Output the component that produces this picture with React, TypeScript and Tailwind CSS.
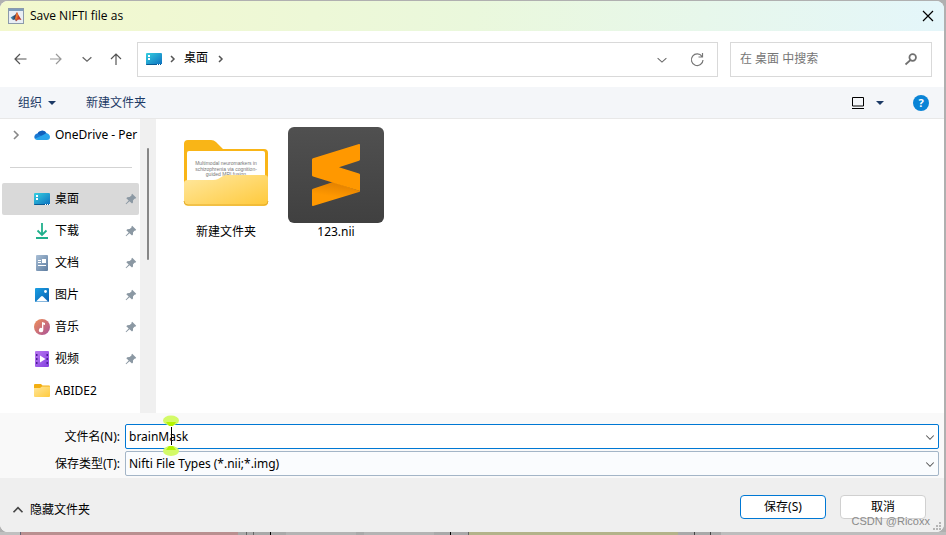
import type { ReactNode } from "react";

const places = [
  { name: "桌面", icon: <DesktopIcon />, pinned: true, active: true },
  { name: "下载", icon: <DownloadIcon />, pinned: true },
  { name: "文档", icon: <DocumentIcon />, pinned: true },
  { name: "图片", icon: <PictureIcon />, pinned: true },
  { name: "音乐", icon: <MusicIcon />, pinned: true },
  { name: "视频", icon: <VideoIcon />, pinned: true },
  { name: "ABIDE2", icon: <SmallFolderIcon />, pinned: false },
];

function Stroke({ d, className = "size-4 text-[#666]", width = 1.2 }: { d: string; className?: string; width?: number }) {
  return (
    <svg viewBox="0 0 16 16" className={`shrink-0 ${className}`} fill="none" stroke="currentColor" strokeWidth={width}>
      <path d={d} />
    </svg>
  );
}

function MatlabIcon() {
  return (
    <svg viewBox="0 0 16 16" className="size-4 shrink-0">
      <defs>
        <linearGradient id="matlab" x1="0" x2="1">
          <stop offset="0" stopColor="#4aa3c9" />
          <stop offset=".4" stopColor="#313f63" />
          <stop offset=".6" stopColor="#d9482b" />
          <stop offset="1" stopColor="#a22b20" />
        </linearGradient>
      </defs>
      <rect x=".5" y=".5" width="15" height="15" fill="#e9eef4" stroke="#8c9aab" />
      <rect x="1" y="1" width="14" height="2" fill="#7f9dbd" />
      <path d="M2.500 9.500l2.500-1.500 2-1 2-3 1.500 3 3 5-2-.6-1.500.4-2 1.700-1-2-2 .5z" fill="url(#matlab)" />
      <path d="M9 4l1 3.500-2 5-1-1.500 1-4z" fill="#e9762c" />
    </svg>
  );
}

function DesktopIcon() {
  return (
    <svg viewBox="0 0 16 16" className="size-4 shrink-0">
      <defs>
        <linearGradient id="desk" x1="0" y1="0" x2="1" y2="1">
          <stop offset="0" stopColor="#35cfe0" />
          <stop offset="1" stopColor="#0d6fc0" />
        </linearGradient>
      </defs>
      <rect y="2" width="16" height="12" rx="1" fill="url(#desk)" />
      <path d="M2 4h2v2H2zM2 7h2v2H2z" fill="#fff" />
      <path d="M0 13h16a1 1 0 0 1-1 1H1a1 1 0 0 1-1-1z" fill="#075a94" />
      <path d="M11 13.500h1M13 13.500h1M15 13.500h1" stroke="#fff" />
    </svg>
  );
}

function DownloadIcon() {
  return (
    <svg viewBox="0 0 16 16" className="size-4 shrink-0" fill="none" stroke="#20b08c" strokeWidth="1.8">
      <path d="M8 0v12M3.500 7.500L8 12l4.500-4.500M2 15h12" />
    </svg>
  );
}

function DocumentIcon() {
  return (
    <svg viewBox="0 0 16 16" className="size-4 shrink-0">
      <defs>
        <linearGradient id="doc" x1="0" y1="0" x2="1" y2="1">
          <stop offset="0" stopColor="#a9bfd6" />
          <stop offset="1" stopColor="#5d7c9f" />
        </linearGradient>
      </defs>
      <rect x="2" y="0" width="12" height="16" rx="1" fill="url(#doc)" />
      <path d="M4 5.500h3M4 7.500h3M4 10.500h8" stroke="#fff" />
      <path d="M8 4h4v4H8z" fill="#fff" />
    </svg>
  );
}

function PictureIcon() {
  return (
    <svg viewBox="0 0 16 16" className="size-4 shrink-0">
      <defs>
        <linearGradient id="pic" x1="0" y1="0" x2="1" y2="1">
          <stop offset="0" stopColor="#1aa0e4" />
          <stop offset="1" stopColor="#0a5fb0" />
        </linearGradient>
      </defs>
      <rect x="1" y="1" width="14" height="14" rx="1" fill="url(#pic)" />
      <path d="M2 14.500l5-5q1-1 2 0l5 5z" fill="#fff" />
      <circle cx="11.500" cy="4.500" r="1.400" fill="#fff" />
    </svg>
  );
}

function MusicIcon() {
  return (
    <svg viewBox="0 0 16 16" className="size-4 shrink-0">
      <defs>
        <linearGradient id="music" x1="0" y1="0" x2="1" y2="1">
          <stop offset="0" stopColor="#f09056" />
          <stop offset="1" stopColor="#a9529a" />
        </linearGradient>
      </defs>
      <circle cx="8" cy="8" r="8" fill="url(#music)" />
      <path d="M8 3l3 1v2L9.300 5.500V11a2.200 2.200 0 1 1-1.300-2z" fill="#fff" />
    </svg>
  );
}

function VideoIcon() {
  return (
    <svg viewBox="0 0 16 16" className="size-4 shrink-0">
      <defs>
        <linearGradient id="video" x1="0" y1="0" x2="1" y2="1">
          <stop offset="0" stopColor="#b978f0" />
          <stop offset="1" stopColor="#8441e0" />
        </linearGradient>
      </defs>
      <rect x="1" width="14" height="16" rx="1" fill="url(#video)" />
      <path d="M2 3h1.500v2H2zM2 7h1.500v2H2zM2 11h1.500v2H2zM12.500 3H14v2h-1.500zM12.500 7H14v2h-1.500zM12.500 11H14v2h-1.500z" fill="#4c1d95" />
      <path d="M6 4.500l5.500 3.500L6 11.500z" fill="#fff" />
    </svg>
  );
}

function SmallFolderIcon() {
  return (
    <svg viewBox="0 0 16 16" className="size-4 shrink-0">
      <defs>
        <linearGradient id="sfold" x1="0" y1="0" x2="1" y2="1">
          <stop offset="0" stopColor="#ffe69a" />
          <stop offset="1" stopColor="#ffca3e" />
        </linearGradient>
      </defs>
      <path d="M0 2A1 1 0 0 1 1 1h6l1.500 1.500H15a1 1 0 0 1 1 1V12H0z" fill="#f3ae10" />
      <path d="M0 5h6L8 3.500h8V13a1 1 0 0 1-1 1H1a1 1 0 0 1-1-1z" fill="url(#sfold)" />
    </svg>
  );
}

function CloudIcon() {
  return (
    <svg viewBox="0 0 16 16" className="size-4 shrink-0">
      <path d="M3 8a5.200 5.200 0 0 1 9.800-1.500L9 10z" fill="#0f5fbd" />
      <path d="M3.500 6.500A3.500 3.500 0 0 0 1 12l8-2z" fill="#1a78d2" />
      <path d="M12 6.300a3.600 3.600 0 0 1 4 3.400A3.300 3.300 0 0 1 12.800 13H3.500A3.500 3.500 0 0 1 .8 11.800L9 8z" fill="#28a4ec" />
    </svg>
  );
}

function PinIcon() {
  return (
    <svg viewBox="0 0 12 12" className="size-3 shrink-0" fill="#8b98a3">
      <path d="M7.200.8L11.200 4.800 10.200 5.800 9.400 5.700 8 7.500 8 9.600 7 10.600 4.500 8.200 1.200 11.300.6 10.800 3.700 7.500 1.300 5.200 2.300 4.200 4.600 4.100 6.500 2.600 6.400 1.700z" />
    </svg>
  );
}

function FolderPreview() {
  return (
    <svg viewBox="0 0 86 68" className="mb-1 h-17 w-[86px]">
      <defs>
        <linearGradient id="front" x1="0" y1="0" x2="1" y2="1">
          <stop offset="0" stopColor="#ffe8a0" />
          <stop offset="1" stopColor="#ffc93a" />
        </linearGradient>
      </defs>
      <path d="M1 5q0-4 4-4h23q3 0 5 2l7 7h41q4 0 4 4v46H1z" fill="#f9b517" />
      <rect x="4" y="12" width="78" height="44" rx="2" fill="#fff" />
      <g fontFamily="Liberation Sans, sans-serif" fontSize="5" fill="#777" textAnchor="middle">
        <text x="43" y="26">Multimodal neuromarkers in</text>
        <text x="43" y="32">schizophrenia via cognition-</text>
        <text x="43" y="37">guided MRI fusion</text>
      </g>
      <path d="M1 44q0-3 4-3h25q3 0 5-1l5-3q2-1 4-1h37q4 0 4 3v24q0 4-4 4H5q-4 0-4-4z" fill="url(#front)" />
      <path d="M1 62q0 4 4 4h76q4 0 4-4" fill="none" stroke="#e5ad2c" />
    </svg>
  );
}

function SublimeIcon() {
  return (
    <svg viewBox="0 0 96 96" className="size-24">
      <defs>
        <linearGradient id="tile" x1="0" y1="0" x2="0" y2="1">
          <stop offset="0" stopColor="#505050" />
          <stop offset="1" stopColor="#404040" />
        </linearGradient>
        <linearGradient id="fold" x1=".3" y1="1" x2=".6" y2="0">
          <stop offset=".4" stopColor="#ff9800" />
          <stop offset="1" stopColor="#e07f00" />
        </linearGradient>
      </defs>
      <rect width="96" height="96" rx="6" fill="url(#tile)" />
      <path d="M24 63q0-1 1-1.300L45 55l27 9q0 .8-1 1.100L25 79q-1 .3-1-1z" fill="url(#fold)" />
      <path d="M24 32.500q0-1 1-1.300L71 17q1-.3 1 1v14.500q0 1-1 1.300L51 40.300l20 6.200q1 .3 1 1.300V64L25 49.500q-1-.3-1-1.300z" fill="#ff9800" />
    </svg>
  );
}

function FileItem({ name, children }: { name: string; children: ReactNode }) {
  return (
    <button className="flex w-[110px] flex-col items-center gap-px">
      <span className="flex h-24 items-center">{children}</span>
      <span className="leading-4">{name}</span>
    </button>
  );
}

function TitleBar() {
  return (
    <header className="flex h-[30px] shrink-0 items-center gap-1.5 bg-linear-to-r from-[#f3f8cd] via-[#eaf8dc] to-[#e4f6fa] px-2">
      <MatlabIcon />
      <h1 className="flex-1 font-['Open_Sans',sans-serif]">Save NIFTI file as</h1>
      <button aria-label="关闭">
        <Stroke d="M3 3l10 10M13 3L3 13" className="size-4 text-black" />
      </button>
    </header>
  );
}

function AddressBar() {
  return (
    <nav className="flex h-14 shrink-0 items-center px-3">
      <div className="flex w-[125px] items-center gap-4">
        <button aria-label="后退"><Stroke d="M14.500 8H3M8 3L3 8l5 5" className="size-4 text-[#555]" /></button>
        <button aria-label="前进" className="ml-1"><Stroke d="M2 8h11M8 3l5 5-5 5" className="size-4 text-[#999]" /></button>
        <button aria-label="最近"><Stroke d="M3 6l5 4.500L13 6" className="size-3.5 text-[#666]" width={1.5} /></button>
        <button aria-label="上移" className="-ml-0.5"><Stroke d="M8 14V3M3 8l5-5 5 5" className="size-4 text-[#555]" /></button>
      </div>
      <div className="flex h-[35px] flex-1 items-center border border-[#d9d9d9] px-2">
        <DesktopIcon />
        <Stroke d="M7 5l3 3-3 3" className="mx-0.5 size-4 text-[#555]" width={1.5} />
        <a href="#" className="mr-1 ml-0.5 pb-0.5">桌面</a>
        <Stroke d="M7 5l3 3-3 3" className="size-4 text-[#555]" width={1.5} />
        <span className="flex-1" />
        <button aria-label="历史" className="mr-5"><Stroke d="M3 7l5 4.500L13 7" className="size-3.5 text-[#666]" /></button>
        <button aria-label="刷新" className="mr-1"><Stroke d="M13 5.500A5.800 5.800 0 1 0 14 9M13.500 2v4h-4" className="size-4 text-[#777]" /></button>
      </div>
      <label className="ml-3 flex h-[35px] w-[202px] items-center border border-[#d9d9d9] px-2">
        <input aria-label="搜索" placeholder="在 桌面 中搜索" className="min-w-0 flex-1 pl-px outline-none placeholder:text-[#767676]" />
        <svg viewBox="0 0 16 16" className="mr-1 size-4" fill="none" stroke="#707070" strokeWidth="1.700">
          <circle cx="9.700" cy="6.500" r="3.300" />
          <path d="M7.500 9L2.500 13.500" />
        </svg>
      </label>
    </nav>
  );
}

function Toolbar() {
  return (
    <div className="flex h-8 shrink-0 items-center border-b border-[#e8e8e8] bg-[#f4f6f9] pr-[15px] pl-4 text-[#1c3a66]">
      <button className="ml-0.5 flex items-center gap-1.5">
        组织
        <svg viewBox="0 0 8 4" className="h-1 w-2"><path d="M0 0h8L4 4z" fill="currentColor" /></svg>
      </button>
      <button className="ml-[30px]">新建文件夹</button>
      <span className="flex-1" />
      <button aria-label="视图" className="flex items-center gap-3">
        <svg viewBox="0 0 12 12" className="size-3" fill="none" stroke="#000"><path d="M.5.500h11v8.500H.500zM0 11.500h12" /></svg>
        <svg viewBox="0 0 8 4" className="h-1 w-2"><path d="M0 0h8L4 4z" fill="currentColor" /></svg>
      </button>
      <button aria-label="帮助" className="ml-[29px] flex size-4 items-center justify-center rounded-full bg-[#0a84d6] text-[11px] font-bold text-white">?</button>
    </div>
  );
}

function Sidebar() {
  return (
    <aside className="flex w-39 shrink-0">
      <div className="min-w-0 flex-1">
        <a href="#" className="flex h-8 items-center gap-[5px] pl-2 whitespace-nowrap">
          <Stroke d="M6 4l4 4-4 4" className="mr-[5px] size-4 text-[#888]" width={1.6} />
          <CloudIcon />
          OneDrive - Per
        </a>
        <hr className="mt-4 mr-2 mb-[15px] ml-2.5 border-[#d3d3d3]" />
        <ul>
          {places.map((place) => (
            <li key={place.name}>
              <a
                href="#"
                className={`mr-px ml-0.5 flex h-8 items-center gap-[5px] rounded-xs pr-0.5 pl-8 ${place.active ? "bg-[#d9d9d9]" : ""}`}
              >
                {place.icon}
                <span className="flex-1">{place.name}</span>
                {place.pinned && <PinIcon />}
              </a>
            </li>
          ))}
        </ul>
      </div>
      <div className="flex w-4 justify-center bg-[#f0f0f0] pt-[29px]">
        <div className="h-28 w-0.5 rounded-full bg-[#868686]" />
      </div>
    </aside>
  );
}

function TextCursor() {
  return (
    <svg viewBox="0 0 16 42" className="absolute -top-[9px] left-[38px] h-[42px] w-4">
      <ellipse cx="8" cy="5.500" rx="8" ry="5" fill="#d3fa68" />
      <ellipse cx="8" cy="36" rx="8" ry="5" fill="#d3fa68" />
      <path d="M3 7h10l-3 4H6zM3 35h10l-3-4H6z" fill="#b4f500" />
      <path d="M8.500 12v18" stroke="#000" />
    </svg>
  );
}

function FileForm() {
  return (
    <div className="grid shrink-0 grid-cols-[120px_1fr] items-center gap-x-[5px] gap-y-0.5 bg-[#f9f9f9] pt-[11px] pr-[5px] pb-0.5">
      <label htmlFor="filename" className="text-right">文件名(N):</label>
      <div className="relative z-10 flex items-center">
        <input
          id="filename"
          defaultValue="brainMask"
          className="h-[25px] w-full rounded-xs border border-[#0078d4] bg-white px-[3px] outline-none"
        />
        <Stroke d="M3 6l5 5 5-5" className="pointer-events-none absolute right-[3px] size-3 text-[#555]" width={1.4} />
        <TextCursor />
      </div>
      <label htmlFor="filetype" className="text-right">保存类型(T):</label>
      <div className="relative flex items-center">
        <select
          id="filetype"
          className="h-[25px] w-full appearance-none rounded-xs border border-[#a3b5c7] bg-[#fafcfe] px-[3px] outline-none"
        >
          <option>Nifti File Types (*.nii;*.img)</option>
        </select>
        <Stroke d="M3 6l5 5 5-5" className="pointer-events-none absolute right-[3px] size-3 text-[#555]" width={1.4} />
      </div>
    </div>
  );
}

function Footer() {
  return (
    <footer className="relative flex h-[54px] shrink-0 items-center bg-[#efefef] pr-[18px] pl-3">
      <button className="mt-2.5 flex items-center gap-1.5">
        <Stroke d="M2 11l6-6 6 6" className="size-3 text-[#444]" width={2.2} />
        隐藏文件夹
      </button>
      <span className="flex-1" />
      <button className="mt-1 h-6 w-[86px] rounded border border-[#0078d4] bg-white">保存(S)</button>
      <button className="mt-1 ml-3.5 h-6 w-[86px] rounded border border-[#d0d0d0] bg-white">取消</button>
      <span className="absolute right-3.5 bottom-[3px] font-['Liberation_Sans',sans-serif] text-[11px] leading-4 text-[#8a8a8a]">CSDN @Ricoxx</span>
      <svg viewBox="0 0 8 8" className="absolute right-[3px] bottom-0.5 size-2" fill="#b5b5b5">
        <path d="M6 0h2v2H6zM3 3h2v2H3zM6 3h2v2H6zM0 6h2v2H0zM3 6h2v2H3zM6 6h2v2H6z" />
      </svg>
    </footer>
  );
}

// sliver of the window that lies behind the dialog
function BackgroundWindow() {
  return (
    <div className="flex h-[3px] shrink-0 bg-[#a9a9a9]">
      <div className="w-5 bg-[#c0c0c0]" />
      <div className="w-[218px] border-l border-[#667] bg-[#b99090]" />
      <div className="ml-2 w-2 border-x border-[#666]" />
      <div className="ml-4 w-4 border-l border-black" />
      <div className="w-[70px] bg-[#b4b4b4]" />
      <div className="ml-2 w-[70px] bg-[#b4b4b4]" />
      <div className="ml-4 w-[18px] border-l border-black" />
      <div className="w-[210px] border-l border-[#666] bg-[#b3b38a]" />
      <div className="ml-4 w-[17px] border-x border-[#444]" />
      <div className="ml-2.5 flex-1 bg-[#bdbdbd]" />
    </div>
  );
}

export default function App() {
  return (
    <div className="flex h-screen flex-col bg-[#b0b0b0] pt-px font-['Noto_Sans','Noto_Sans_CJK_SC',sans-serif] text-[12px] leading-4 text-black">
      <main className="mr-0.5 flex min-h-0 flex-1 flex-col overflow-hidden rounded-lg bg-white">
        <TitleBar />
        <AddressBar />
        <Toolbar />
        <div className="flex min-h-0 flex-1">
          <Sidebar />
          <section className="flex flex-1 items-start gap-x-0 pt-2 pl-[15px]">
            <FileItem name="新建文件夹"><FolderPreview /></FileItem>
            <FileItem name="123.nii"><SublimeIcon /></FileItem>
          </section>
        </div>
        <FileForm />
        <Footer />
      </main>
      <BackgroundWindow />
    </div>
  );
}
